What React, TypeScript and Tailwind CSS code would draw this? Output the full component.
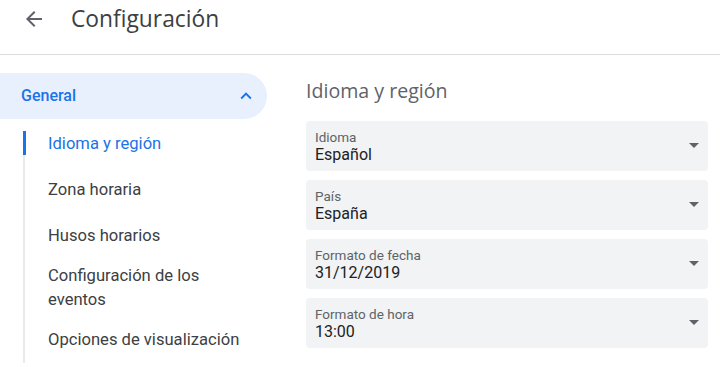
import React from "react";

const heading = { fontFamily: '"Open Sans", "Noto Sans", sans-serif' };

function Field({ label, value }: { label: string; value: string }) {
  return (
    <div className="relative h-[50px] rounded-[4px] bg-[#f1f3f4] pl-[9px] pt-[8px]">
      <div className="text-[13.5px] leading-[16px] text-[#5f6368]">{label}</div>
      <div className="text-[16px] leading-[20px] text-[#202124]">{value}</div>
      <svg className="absolute right-[9px] top-[22px]" width="10" height="5" viewBox="0 0 10 5">
        <path d="M0 0 L10 0 L5 5 Z" fill="#5f6368" />
      </svg>
    </div>
  );
}

const items = [
  "Idioma y región",
  "Zona horaria",
  "Husos horarios",
  "Configuración de los eventos",
  "Opciones de visualización",
];

export default function App() {
  return (
    <div className="h-[367px] w-[720px] overflow-hidden bg-white" style={{ fontFamily: 'Roboto, "Liberation Sans", sans-serif' }}>
      <header className="flex h-[55px] items-center border-b border-[#dadce0] pb-[1px]">
        <svg className="ml-[22px] mt-[-16px]" width="24" height="24" viewBox="0 0 24 24">
          <path d="M20 11H7.83l5.59-5.59L12 4l-8 8 8 8 1.41-1.41L7.83 13H20v-2z" fill="#5f6368" />
        </svg>
        <h1 className="ml-[25px] mt-[-16px] text-[22.8px] leading-[28px] text-[#3c4043]" style={heading}>
          Configuración
        </h1>
      </header>
      <div className="flex">
        <nav className="w-[306px] shrink-0 pt-[18px]">
          <div className="flex h-[46px] w-[267px] items-center justify-between rounded-r-full bg-[#e8f0fe] pl-[21px] pr-[10px]">
            <span className="text-[16px] font-medium text-[#1a73e8]">General</span>
            <svg width="22" height="22" viewBox="0 0 24 24">
              <path d="M12 8l-6 6 1.41 1.41L12 10.83l4.59 4.58L18 14z" fill="#1a73e8" />
            </svg>
          </div>
          <div className="relative ml-[23px] pt-[1.5px] pl-[25px]">
            <div className="absolute left-0 top-[12px] bottom-0 w-[2px] bg-[#e8eaed]" />
            <div className="absolute left-0 top-[12px] h-[24px] w-[3px] bg-[#1a73e8]" />
            {items.map((t, i) => (
              <div
                key={t}
                className={`flex min-h-[46px] w-[210px] items-center py-[5px] text-[16.6px] leading-[24px] ${
                  i === 0 ? "text-[#1a73e8]" : "text-[#3c4043]"
                }`}
              >
                {t}
              </div>
            ))}
          </div>
        </nav>
        <main className="flex-1 pr-[12px] pt-[22px]">
          <h2 className="mb-[16px] text-[19.6px] leading-[28px] text-[#5f6368]" style={heading}>
            Idioma y región
          </h2>
          <div className="flex flex-col gap-[9px]">
            <Field label="Idioma" value="Español" />
            <Field label="País" value="España" />
            <Field label="Formato de fecha" value="31/12/2019" />
            <Field label="Formato de hora" value="13:00" />
          </div>
        </main>
      </div>
    </div>
  );
}
